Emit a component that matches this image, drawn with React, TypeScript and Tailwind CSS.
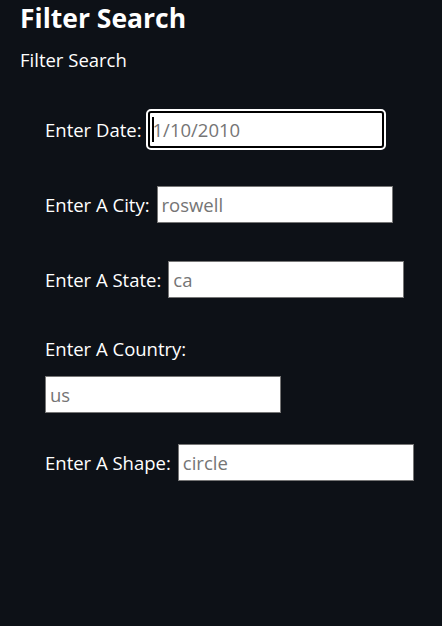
const fields = [
  { label: "Enter A City:", placeholder: "roswell" },
  { label: "Enter A State:", placeholder: "ca" },
];

export default function App() {
  return (
    <div className="min-h-screen bg-[#0d1117] px-[20px] text-white font-['Open_Sans','Liberation_Sans',sans-serif]">
      <h1 className="text-[26.5px] font-bold leading-[36px]">Filter Search</h1>
      <p className="mt-[11px] text-[18.5px] leading-[26px]">Filter Search</p>

      <form className="ml-[25px] flex flex-col text-[18.5px]">
        {/* focused date row */}
        <div className="mt-[38px] flex h-[37px] items-center gap-[6px]">
          <label>Enter Date:</label>
          <div className="relative">
            <input
              placeholder="1/10/2010"
              className="h-[37px] w-[236px] rounded-[3px] border-2 border-black bg-white px-[3px] text-[18.5px] text-black outline-2 outline-white placeholder:text-[#757575]"
            />
            <span className="absolute left-[4px] top-[6px] h-[25px] w-[2px] bg-black" />
          </div>
        </div>

        {fields.map((f, i) => (
          <div key={i} className="mt-[38px] flex h-[37px] items-center gap-[7px]">
            <label>{f.label}</label>
            <input
              placeholder={f.placeholder}
              className="h-[37px] w-[236px] border border-[#767676] bg-white px-[4px] text-[18.5px] text-black outline-none placeholder:text-[#757575]"
            />
          </div>
        ))}

        {/* wraps onto two lines */}
        <div className="mt-[38px] flex flex-col items-start gap-[14px]">
          <label className="leading-[26px]">Enter A Country:</label>
          <input
            placeholder="us"
            className="h-[37px] w-[236px] border border-[#767676] bg-white px-[4px] text-[18.5px] text-black outline-none placeholder:text-[#757575]"
          />
        </div>

        <div className="mt-[31px] flex h-[37px] items-center gap-[7px]">
          <label>Enter A Shape:</label>
          <input
            placeholder="circle"
            className="h-[37px] w-[236px] border border-[#767676] bg-white px-[4px] text-[18.5px] text-black outline-none placeholder:text-[#757575]"
          />
        </div>
      </form>
    </div>
  );
}
